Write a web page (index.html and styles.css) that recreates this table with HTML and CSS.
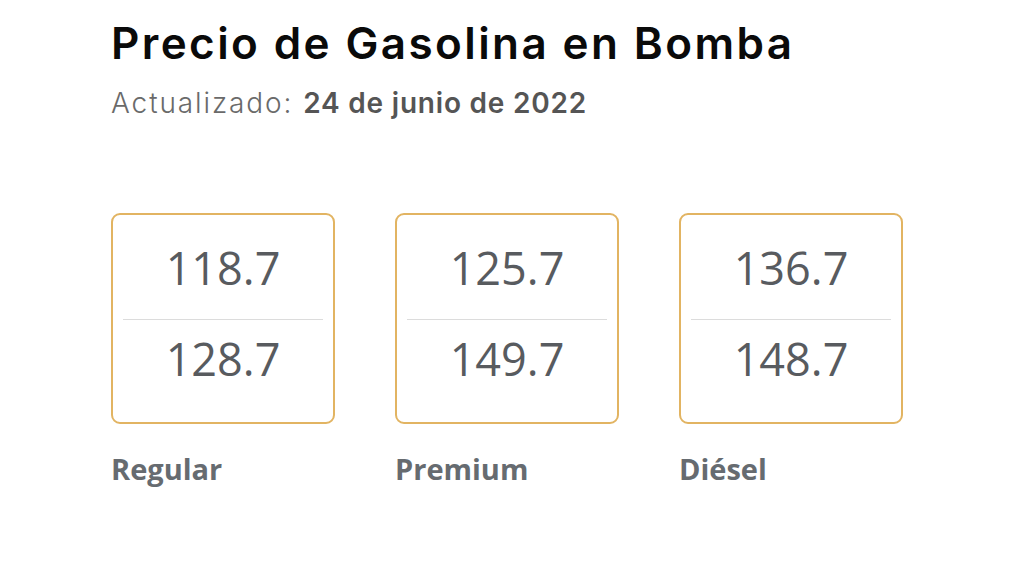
FILE: index.html
```html
<!DOCTYPE html>
<html lang="es">
<head>
<meta charset="utf-8">
<link rel="stylesheet" href="styles.css">
</head>
<body>
<main class="page">
  <h1 class="title">Precio de Gasolina en Bomba</h1>
  <p class="updated">Actualizado: <strong>24 de junio de 2022</strong></p>
  <section class="prices">
    <div class="fuel">
      <div class="box">
        <div class="price top">118.7</div>
        <div class="divider"></div>
        <div class="price bottom">128.7</div>
      </div>
      <div class="label">Regular</div>
    </div>
    <div class="fuel">
      <div class="box">
        <div class="price top">125.7</div>
        <div class="divider"></div>
        <div class="price bottom">149.7</div>
      </div>
      <div class="label">Premium</div>
    </div>
    <div class="fuel">
      <div class="box">
        <div class="price top">136.7</div>
        <div class="divider"></div>
        <div class="price bottom">148.7</div>
      </div>
      <div class="label">Diésel</div>
    </div>
  </section>
</main>
</body>
</html>
```
FILE: styles.css
```css
html, body {
  margin: 0;
  padding: 0;
  background: #fff;
}
.page {
  padding: 18px 0 0 111px;
}
.title {
  margin: 0;
  font-family: "Inter", "Open Sans", sans-serif;
  font-weight: 600;
  font-size: 44px;
  line-height: 50px;
  color: #0a0a0a;
  letter-spacing: 2.4px;
}
.updated {
  margin: 20px 0 0;
  font-family: "Inter", "Open Sans", sans-serif;
  font-weight: 300;
  font-size: 28px;
  line-height: 30px;
  letter-spacing: 1.9px;
  color: #6a6a6a;
}
.updated strong {
  font-weight: 600;
  letter-spacing: 0.8px;
  color: #555;
}
.prices {
  display: flex;
  gap: 60px;
  margin-top: 95px;
}
.fuel {
  width: 224px;
}
.box {
  box-sizing: border-box;
  height: 211px;
  border: 2px solid #e2b462;
  border-radius: 9px;
  padding: 30px 10px 0;
}
.price {
  text-align: center;
  font-family: "Open Sans", sans-serif;
  font-weight: 400;
  font-size: 45px;
  line-height: 45px;
  color: #585b5f;
}
.price.top {
  margin-bottom: 29px;
}
.price.bottom {
  margin-top: 16px;
}
.divider {
  height: 1px;
  background: #dcdcdc;
}
.label {
  margin-top: 27px;
  font-family: "Open Sans", sans-serif;
  font-weight: 700;
  font-size: 29px;
  line-height: 36px;
  color: #666b70;
}
```
